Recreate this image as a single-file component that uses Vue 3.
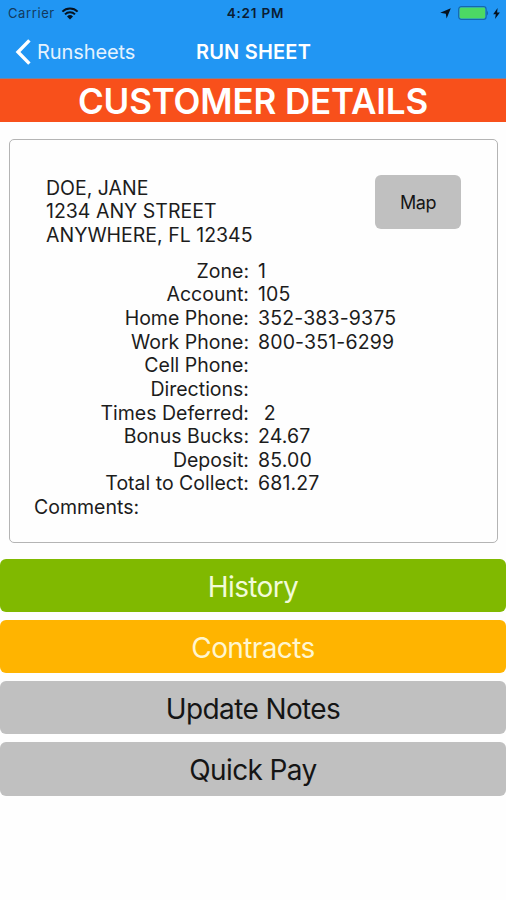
<script setup>
import { ref } from "vue";

const address = ref(["DOE, JANE", "1234 ANY STREET", "ANYWHERE, FL 12345"]);

const details = ref([
  { label: "Zone:", value: "1" },
  { label: "Account:", value: "105" },
  { label: "Home Phone:", value: "352-383-9375" },
  { label: "Work Phone:", value: "800-351-6299" },
  { label: "Cell Phone:", value: "" },
  { label: "Directions:", value: "" },
  { label: "Times Deferred:", value: " 2" },
  { label: "Bonus Bucks:", value: "24.67" },
  { label: "Deposit:", value: "85.00" },
  { label: "Total to Collect:", value: "681.27" },
]);

const actions = ref([
  { name: "history", text: "History" },
  { name: "contracts", text: "Contracts" },
  { name: "notes", text: "Update Notes" },
  { name: "pay", text: "Quick Pay" },
]);
</script>

<template>
  <div class="screen">
    <header>
      <div class="status">
        <div class="side">
          <span class="carrier">Carrier</span>
          <svg class="wifi" width="18" height="13" viewBox="0 0 18 13">
            <path d="M1.4 4.6a10.8 10.8 0 0 1 15.2 0" />
            <path d="M4 7.4a7.1 7.1 0 0 1 10 0" />
            <path class="dot" d="M9 12.4L6 9.4a4.3 4.3 0 0 1 6 0z" />
          </svg>
        </div>
        <span class="time">4:21 PM</span>
        <div class="side right">
          <svg class="arrow" width="11" height="11" viewBox="0 0 11 11">
            <path d="M10.8 0.2L6.6 10.6L5.8 5.8L0.2 4.8z" />
          </svg>
          <svg class="battery" width="31" height="14" viewBox="0 0 31 14">
            <rect class="shell" x="0.7" y="0.7" width="27.4" height="12.6" rx="2.6" />
            <rect class="charge" x="1.6" y="1.6" width="25.6" height="10.8" rx="1.4" />
            <path class="shell-cap" d="M28.8 4.2q2.6 2.8 0 5.6z" />
          </svg>
          <svg class="bolt" width="7" height="11" viewBox="0 0 7 11">
            <path d="M4.6 0L0.2 6.2H2.8L2 11L6.9 4.6H4.1z" />
          </svg>
        </div>
      </div>
      <nav>
        <a class="back">
          <svg width="16" height="26" viewBox="0 0 16 26">
            <path d="M14.4 1.4L3 13L14.4 24.6" />
          </svg>
          <span>Runsheets</span>
        </a>
        <h1>RUN SHEET</h1>
      </nav>
    </header>

    <h2>CUSTOMER DETAILS</h2>

    <section class="card">
      <div class="top">
        <div class="address">
          <p v-for="line in address" :key="line">{{ line }}</p>
        </div>
        <button class="map">Map</button>
      </div>
      <dl>
        <template v-for="item in details" :key="item.label">
          <dt>{{ item.label }}</dt>
          <dd>{{ item.value }}</dd>
        </template>
      </dl>
      <p class="comments">Comments:</p>
    </section>

    <div class="actions">
      <button v-for="action in actions" :key="action.name" :class="action.name">
        {{ action.text }}
      </button>
    </div>
  </div>
</template>

<style>
body {
  background: #fefefe;
}
</style>

<style scoped>
.screen {
  min-height: 900px;
  font-family: Inter, "Liberation Sans", sans-serif;
  color: #1c1c1c;
}

h1,
h2,
p,
dl,
dd {
  margin: 0;
}

button {
  display: block;
  border: 0;
  padding: 0;
  font-family: inherit;
  color: #151515;
  background: #c0c0c0;
  border-radius: 6px;
}

header {
  height: 79px;
  box-sizing: border-box;
  background: #2196f3;
  border-bottom: 1px solid #77849c;
}

.status {
  display: grid;
  grid-template-columns: 1fr auto 1fr;
  align-items: center;
  height: 26px;
  padding: 0 5px 0 8px;
  font-size: 13px;
  color: #0b1d33;
}

.side {
  display: flex;
  align-items: center;
}

.right {
  justify-content: flex-end;
}

.carrier {
  color: #123a60;
  letter-spacing: 0.6px;
}

.wifi {
  margin-left: 6px;
  fill: none;
  stroke: #06121f;
  stroke-width: 2;
}

.wifi .dot {
  fill: #06121f;
  stroke: none;
}

.time {
  padding-left: 2px;
  font-size: 13.5px;
  font-weight: 600;
  letter-spacing: 0.8px;
}

.arrow,
.bolt {
  fill: #06121f;
}

.arrow {
  margin-right: 7px;
}

.battery {
  margin-right: 4px;
}

.bolt {
  margin-right: 1px;
}

.shell {
  fill: none;
  stroke: #1767ac;
  stroke-width: 1.2;
}

.shell-cap {
  fill: #1767ac;
}

.charge {
  fill: #4cd964;
}

nav {
  display: grid;
  grid-template-columns: 1fr auto 1fr;
  align-items: center;
  height: 52px;
  padding: 0 15px;
  color: #fff;
}

.back {
  display: flex;
  align-items: center;
  gap: 6px;
  font-size: 20px;
  letter-spacing: -0.1px;
  color: #e4f2fe;
}

.back path {
  fill: none;
  stroke: #fff;
  stroke-width: 3.4;
}

h1 {
  padding-left: 1px;
  font-size: 20px;
  font-weight: 600;
  letter-spacing: 0.2px;
}

h2 {
  height: 43px;
  line-height: 44px;
  text-align: center;
  font-size: 35px;
  font-weight: 600;
  letter-spacing: -0.15px;
  color: #fff;
  background: #f8501b;
}

.card {
  box-sizing: border-box;
  width: 489px;
  height: 404px;
  margin: 17px 8px 16px 9px;
  border: 1px solid #b4b4b4;
  border-radius: 5px;
  font-size: 19.5px;
  line-height: 23.65px;
}

.top {
  display: flex;
  justify-content: space-between;
  padding: 35px 36px 0;
}

.address {
  padding-top: 1.5px;
}

.map {
  width: 86px;
  height: 54px;
  font-size: 18px;
  letter-spacing: -0.4px;
}

dl {
  display: grid;
  grid-template-columns: 239px 1fr;
  column-gap: 9px;
  grid-auto-rows: 23.65px;
  margin-top: 12.2px;
}

dt {
  text-align: right;
}

dd {
  white-space: pre;
  letter-spacing: 0.15px;
}

.comments {
  padding-left: 24px;
}

.actions {
  display: flex;
  flex-direction: column;
  gap: 7.8px;
}

.actions button {
  height: 53.3px;
  padding-top: 2px;
  font-size: 28px;
  letter-spacing: -0.62px;
}

.actions .history {
  color: #f2fbd9;
  background: #80b900;
}

.actions .contracts {
  color: #fff6cf;
  background: #ffb400;
}
</style>
